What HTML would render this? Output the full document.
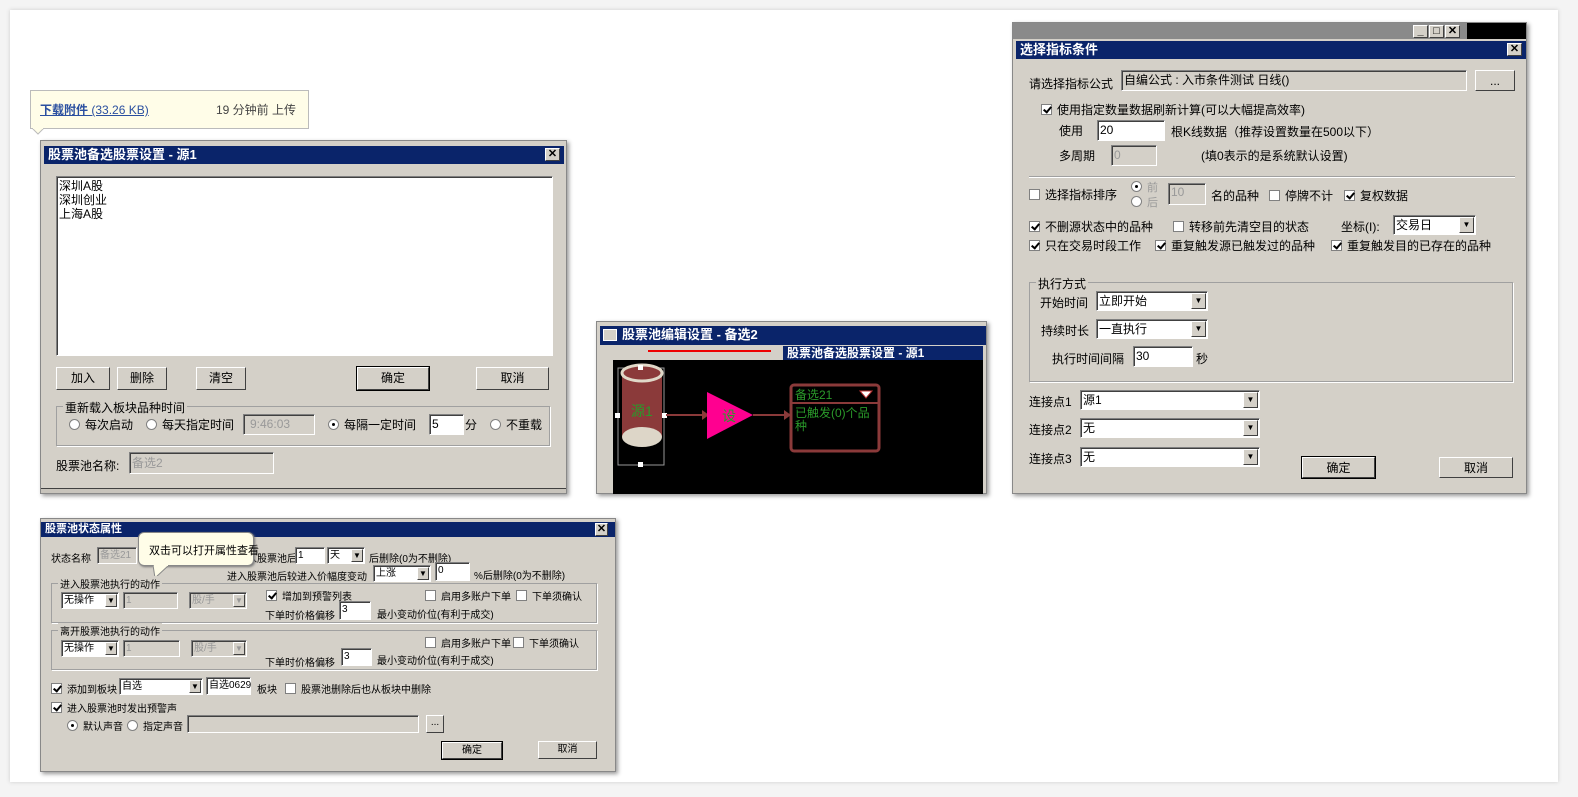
<!DOCTYPE html>
<html><head><meta charset="utf-8"><style>
*{box-sizing:border-box;margin:0;padding:0}
body{width:1578px;height:797px;background:#f4f4f4;position:relative;overflow:hidden;font-family:"Liberation Sans","Noto Sans CJK SC","WenQuanYi Zen Hei",sans-serif;font-size:12px;color:#000}
.a{position:absolute}
.frame{left:10px;top:10px;width:1548px;height:772px;background:#fff;box-shadow:0 0 4px #ccc}
.dlg{position:absolute;background:#d4d0c8;border:1px solid #888;box-shadow:2px 2px 4px #999}
.tb{position:absolute;background:#0a246a;color:#fff;font-weight:bold;font-size:13px;line-height:17px;padding-left:4px;white-space:nowrap;overflow:hidden}
.x{position:absolute;width:15px;height:13px;background:#d4d0c8;border:1px solid;border-color:#fff #404040 #404040 #fff;color:#000;font-size:11px;line-height:11px;text-align:center;font-weight:bold}
.in{position:absolute;background:#fff;border:1px solid;border-color:#808080 #fff #fff #808080;box-shadow:inset 1px 1px 0 #404040;padding-left:2px;line-height:16px;white-space:nowrap}
.dis{background:#d4d0c8;color:#999}
.btn{position:absolute;background:#d4d0c8;border:1px solid;border-color:#fff #404040 #404040 #fff;text-align:center;line-height:20px}
.def{outline:1px solid #000}
.t{position:absolute;white-space:nowrap}
.cb{display:inline-block;width:11px;height:11px;background:#fff;border:1px solid #808080;vertical-align:-1px;margin-right:5px;position:relative}
.cb.on::after{content:"";position:absolute;left:3px;top:0px;width:3px;height:6px;border:solid #000;border-width:0 2px 2px 0;transform:rotate(40deg)}
.rb{display:inline-block;width:11px;height:11px;background:#fff;border:1px solid #808080;border-radius:50%;vertical-align:-1px;margin-right:5px;position:relative}
.rb.on::after{content:"";position:absolute;left:3px;top:3px;width:3px;height:3px;background:#000;border-radius:50%}
.grp{position:absolute;border:1px solid #a0a0a0;box-shadow:1px 1px 0 #fff}
.grp>span{position:absolute;top:-8px;left:6px;background:#d4d0c8;padding:0 2px;white-space:nowrap}
.dd{position:absolute;right:1px;top:1px;width:15px;bottom:1px;background:#d4d0c8;border:1px solid;border-color:#fff #404040 #404040 #fff;font-size:8px;text-align:center;line-height:14px}
</style></head><body>
<div class="a frame"></div>

<!-- tooltip -->
<div class="a" style="left:30px;top:90px;width:279px;height:39px;background:#fffde8;border:1px solid #bbb"></div>
<svg class="a" style="left:32px;top:128px" width="14" height="8"><polygon points="0,0 12,0 6,6" fill="#fffde8" stroke="#bbb"/><line x1="1" y1="0" x2="11" y2="0" stroke="#fffde8" stroke-width="2"/></svg>
<div class="t" style="left:40px;top:101px;color:#2a4fa0;text-decoration:underline"><b>下载附件</b> (33.26 KB)</div>
<div class="t" style="left:216px;top:101px;color:#444">19 分钟前 上传</div>

<!-- dialog 1 -->
<div class="dlg" style="left:40px;top:140px;width:527px;height:354px">
 <div class="tb" style="left:3px;top:5px;width:520px;height:18px">股票池备选股票设置 - 源1</div>
 <div class="x" style="left:504px;top:7px">✕</div>
 <div class="in" style="left:15px;top:35px;width:497px;height:180px;line-height:14px;padding:2px">深圳A股<br>深圳创业<br>上海A股</div>
 <div class="btn" style="left:15px;top:226px;width:54px;height:23px">加入</div>
 <div class="btn" style="left:76px;top:226px;width:50px;height:23px">删除</div>
 <div class="btn" style="left:155px;top:226px;width:50px;height:23px">清空</div>
 <div class="btn def" style="left:316px;top:226px;width:72px;height:23px">确定</div>
 <div class="btn" style="left:435px;top:226px;width:73px;height:23px">取消</div>
 <div class="grp" style="left:15px;top:265px;width:494px;height:40px"><span>重新载入板块品种时间</span></div>
 <div class="t" style="left:28px;top:275px"><span class="rb"></span>每次启动</div>
 <div class="t" style="left:105px;top:275px"><span class="rb"></span>每天指定时间</div>
 <div class="in dis" style="left:202px;top:273px;width:72px;height:21px;padding-left:6px;line-height:19px">9:46:03</div>
 <div class="t" style="left:287px;top:275px"><span class="rb on"></span>每隔一定时间</div>
 <div class="in" style="left:388px;top:273px;width:35px;height:21px;line-height:19px">5</div>
 <div class="t" style="left:424px;top:275px">分</div>
 <div class="t" style="left:449px;top:275px"><span class="rb"></span>不重载</div>
 <div class="t" style="left:15px;top:316px">股票池名称:</div>
 <div class="in dis" style="left:88px;top:311px;width:145px;height:22px;line-height:20px">备选2</div>
 <div class="a" style="left:0;top:347px;width:525px;height:5px;border-top:1px solid #404040;background:#c8c4bc"></div>
</div>

<!-- dialog 2 -->
<div class="dlg" style="left:596px;top:321px;width:391px;height:173px">
 <div class="tb" style="left:3px;top:4px;width:386px;height:19px;padding-left:22px">股票池编辑设置 - 备选2</div>
 <div class="a" style="left:6px;top:7px;width:14px;height:12px;background:#d4d0c8;border:1px solid #fff"></div>
 <div class="a" style="left:51px;top:28px;width:123px;height:2px;background:#e00"></div>
 <div class="tb" style="left:186px;top:24px;width:200px;height:14px;line-height:14px;font-size:12px">股票池备选股票设置 - 源1</div>
 <div class="a" style="left:16px;top:38px;width:370px;height:134px;background:#000"></div>
 <svg class="a" style="left:16px;top:38px" width="370" height="134">
  <rect x="5" y="8" width="46" height="97" fill="none" stroke="#999"/>
  <rect x="9" y="13" width="40" height="64" fill="#8b3a3a"/>
  <ellipse cx="29" cy="13" rx="20" ry="8" fill="#8b3a3a" stroke="#e0d8c8" stroke-width="3"/>
  <ellipse cx="29" cy="77" rx="20" ry="10" fill="#ddd6c8"/>
  <text x="18" y="56" fill="#2a9a2a" font-size="14">源1</text>
  <rect x="25" y="5" width="5" height="5" fill="#fff"/><rect x="25" y="102" width="5" height="5" fill="#fff"/>
  <rect x="2" y="53" width="5" height="5" fill="#fff"/><rect x="49" y="53" width="5" height="5" fill="#fff"/>
  <line x1="53" y1="55" x2="94" y2="55" stroke="#8b3a3a" stroke-width="2"/><polygon points="89,50 96,55 89,60" fill="#8b3a3a"/>
  <polygon points="94,32 94,79 140,55" fill="#ff0090"/>
  <text x="109" y="61" fill="#2a9a2a" font-size="14">设</text>
  <line x1="140" y1="55" x2="176" y2="55" stroke="#8b3a3a" stroke-width="2"/><polygon points="171,50 178,55 171,60" fill="#8b3a3a"/>
  <rect x="178" y="25" width="88" height="66" rx="3" fill="none" stroke="#8b3a3a" stroke-width="3"/>
  <line x1="178" y1="43" x2="266" y2="43" stroke="#8b3a3a" stroke-width="2"/>
  <text x="182" y="39" fill="#2a9a2a" font-size="12">备选21</text>
  <polygon points="247,31 259,31 253,38" fill="#fff" stroke="#b33"/>
  <text x="182" y="57" fill="#2a9a2a" font-size="12">已触发(0)个品</text>
  <text x="182" y="70" fill="#2a9a2a" font-size="12">种</text>
 </svg>
</div>

<!-- dialog 3 -->
<div class="dlg" style="left:1012px;top:22px;width:515px;height:472px">
 <div class="a" style="left:0;top:0;width:513px;height:16px;background:#8a8a8a"></div>
 <div class="x" style="left:400px;top:2px;height:13px">_</div>
 <div class="x" style="left:416px;top:2px;height:13px">□</div>
 <div class="x" style="left:432px;top:2px;height:13px">✕</div>
 <div class="a" style="left:454px;top:0;width:59px;height:16px;background:#000"></div>
 <div class="tb" style="left:3px;top:18px;width:510px;height:18px">选择指标条件</div>
 <div class="x" style="left:494px;top:20px">✕</div>
 <div class="t" style="left:16px;top:52px">请选择指标公式</div>
 <div class="in dis" style="left:108px;top:47px;width:346px;height:21px;color:#000;line-height:19px">自编公式 : 入市条件测试 日线()</div>
 <div class="btn" style="left:462px;top:47px;width:40px;height:21px">...</div>
 <div class="t" style="left:28px;top:78px"><span class="cb on"></span>使用指定数量数据刷新计算(可以大幅提高效率)</div>
 <div class="t" style="left:46px;top:99px">使用</div>
 <div class="in" style="left:84px;top:97px;width:68px;height:21px;line-height:19px">20</div>
 <div class="t" style="left:158px;top:100px">根K线数据（推荐设置数量在500以下）</div>
 <div class="t" style="left:46px;top:124px">多周期</div>
 <div class="in dis" style="left:98px;top:122px;width:46px;height:21px;line-height:19px">0</div>
 <div class="t" style="left:188px;top:124px">(填0表示的是系统默认设置)</div>
 <div class="a" style="left:16px;top:153px;width:486px;height:2px;border-top:1px solid #a0a0a0;border-bottom:1px solid #fff"></div>
 <div class="t" style="left:16px;top:163px"><span class="cb"></span>选择指标排序</div>
 <div class="t" style="left:118px;top:156px;color:#999;font-size:11px"><span class="rb on"></span>前</div>
 <div class="t" style="left:118px;top:171px;color:#999;font-size:11px"><span class="rb"></span>后</div>
 <div class="in dis" style="left:155px;top:160px;width:38px;height:22px">10</div>
 <div class="t" style="left:198px;top:164px">名的品种</div>
 <div class="t" style="left:256px;top:164px"><span class="cb"></span>停牌不计</div>
 <div class="t" style="left:331px;top:164px"><span class="cb on"></span>复权数据</div>
 <div class="t" style="left:16px;top:195px"><span class="cb on"></span>不删源状态中的品种</div>
 <div class="t" style="left:160px;top:195px"><span class="cb"></span>转移前先清空目的状态</div>
 <div class="t" style="left:328px;top:195px">坐标(I):</div>
 <div class="in" style="left:380px;top:192px;width:83px;height:20px;line-height:18px">交易日<div class="dd">▼</div></div>
 <div class="t" style="left:16px;top:214px"><span class="cb on"></span>只在交易时段工作</div>
 <div class="t" style="left:142px;top:214px"><span class="cb on"></span>重复触发源已触发过的品种</div>
 <div class="t" style="left:318px;top:214px"><span class="cb on"></span>重复触发目的已存在的品种</div>
 <div class="grp" style="left:16px;top:259px;width:484px;height:100px"><span>执行方式</span></div>
 <div class="t" style="left:27px;top:271px">开始时间</div>
 <div class="in" style="left:83px;top:268px;width:112px;height:20px;line-height:18px">立即开始<div class="dd">▼</div></div>
 <div class="t" style="left:28px;top:299px">持续时长</div>
 <div class="in" style="left:83px;top:296px;width:112px;height:20px;line-height:18px">一直执行<div class="dd">▼</div></div>
 <div class="t" style="left:39px;top:327px">执行时间间隔</div>
 <div class="in" style="left:120px;top:323px;width:60px;height:21px;line-height:19px">30</div>
 <div class="t" style="left:183px;top:327px">秒</div>
 <div class="t" style="left:16px;top:370px">连接点1</div>
 <div class="in" style="left:67px;top:367px;width:180px;height:20px;line-height:18px">源1<div class="dd">▼</div></div>
 <div class="t" style="left:16px;top:398px">连接点2</div>
 <div class="in" style="left:67px;top:395px;width:180px;height:20px;line-height:18px">无<div class="dd">▼</div></div>
 <div class="t" style="left:16px;top:427px">连接点3</div>
 <div class="in" style="left:67px;top:424px;width:180px;height:20px;line-height:18px">无<div class="dd">▼</div></div>
 <div class="btn def" style="left:289px;top:434px;width:73px;height:21px">确定</div>
 <div class="btn" style="left:426px;top:434px;width:74px;height:21px">取消</div>
</div>

<!-- dialog 4 -->
<div class="dlg" style="left:40px;top:518px;width:576px;height:254px;font-size:10px">
 <div class="tb" style="left:0;top:3px;width:574px;height:15px;line-height:15px;font-size:11px">股票池状态属性</div>
 <div class="x" style="left:554px;top:4px;height:13px;width:13px">✕</div>
 <div class="t" style="left:10px;top:31px">状态名称</div>
 <div class="in dis" style="left:56px;top:28px;width:40px;height:17px;line-height:15px">备选21</div>
 <div class="t" style="left:196px;top:31px">进入股票池后</div>
 <div class="in" style="left:254px;top:28px;width:30px;height:17px;line-height:15px">1</div>
 <div class="in" style="left:286px;top:28px;width:38px;height:17px;line-height:15px">天<div class="dd" style="width:12px;line-height:12px">▼</div></div>
 <div class="t" style="left:328px;top:31px">后删除(0为不删除)</div>
 <div class="t" style="left:186px;top:49px">进入股票池后较进入价幅度变动</div>
 <div class="in" style="left:332px;top:46px;width:58px;height:17px;line-height:15px">上涨<div class="dd" style="width:12px;line-height:12px">▼</div></div>
 <div class="in" style="left:394px;top:43px;width:35px;height:19px;line-height:15px">0</div>
 <div class="t" style="left:433px;top:48px">%后删除(0为不删除)</div>
 <div class="a" style="left:97px;top:13px;width:116px;height:34px;background:#fffde8;border:1px solid #888;border-radius:6px;box-shadow:1px 1px 2px #777"></div>
 <div class="t" style="left:108px;top:23px;font-size:11px">双击可以打开属性查看</div>
 <svg class="a" style="left:112px;top:46px" width="20" height="14"><polygon points="0,0 16,0 2,13" fill="#fffde8" stroke="#888"/><line x1="1" y1="0" x2="15" y2="0" stroke="#fffde8" stroke-width="2"/></svg>
 <div class="grp" style="left:10px;top:64px;width:546px;height:40px"><span>进入股票池执行的动作</span></div>
 <div class="in" style="left:20px;top:73px;width:58px;height:17px;line-height:15px">无操作<div class="dd" style="width:12px;line-height:12px">▼</div></div>
 <div class="in dis" style="left:82px;top:73px;width:55px;height:17px;line-height:15px">1</div>
 <div class="in dis" style="left:148px;top:73px;width:58px;height:17px;line-height:15px">股/手<div class="dd" style="width:12px;line-height:12px">▼</div></div>
 <div class="t" style="left:225px;top:69px"><span class="cb on"></span>增加到预警列表</div>
 <div class="t" style="left:384px;top:69px"><span class="cb"></span>启用多账户下单</div>
 <div class="t" style="left:475px;top:69px"><span class="cb"></span>下单须确认</div>
 <div class="t" style="left:224px;top:88px">下单时价格偏移</div>
 <div class="in" style="left:298px;top:82px;width:32px;height:19px;line-height:15px">3</div>
 <div class="t" style="left:336px;top:87px">最小变动价位(有利于成交)</div>
 <div class="grp" style="left:10px;top:111px;width:546px;height:40px"><span>离开股票池执行的动作</span></div>
 <div class="in" style="left:20px;top:121px;width:58px;height:17px;line-height:15px">无操作<div class="dd" style="width:12px;line-height:12px">▼</div></div>
 <div class="in dis" style="left:82px;top:121px;width:57px;height:17px;line-height:15px">1</div>
 <div class="in dis" style="left:150px;top:121px;width:56px;height:17px;line-height:15px">股/手<div class="dd" style="width:12px;line-height:12px">▼</div></div>
 <div class="t" style="left:384px;top:116px"><span class="cb"></span>启用多账户下单</div>
 <div class="t" style="left:472px;top:116px"><span class="cb"></span>下单须确认</div>
 <div class="t" style="left:224px;top:135px">下单时价格偏移</div>
 <div class="in" style="left:300px;top:129px;width:31px;height:18px;line-height:15px">3</div>
 <div class="t" style="left:336px;top:133px">最小变动价位(有利于成交)</div>
 <div class="t" style="left:10px;top:162px"><span class="cb on"></span>添加到板块</div>
 <div class="in" style="left:78px;top:159px;width:84px;height:17px;line-height:15px">自选<div class="dd" style="width:12px;line-height:12px">▼</div></div>
 <div class="in" style="left:165px;top:158px;width:45px;height:18px;line-height:15px">自选0629</div>
 <div class="t" style="left:216px;top:162px">板块</div>
 <div class="t" style="left:244px;top:162px"><span class="cb"></span>股票池删除后也从板块中删除</div>
 <div class="t" style="left:10px;top:181px"><span class="cb on"></span>进入股票池时发出预警声</div>
 <div class="t" style="left:26px;top:199px"><span class="rb on"></span>默认声音</div>
 <div class="t" style="left:86px;top:199px"><span class="rb"></span>指定声音</div>
 <div class="in dis" style="left:146px;top:196px;width:232px;height:18px"></div>
 <div class="btn" style="left:385px;top:196px;width:18px;height:18px;line-height:14px">...</div>
 <div class="btn def" style="left:401px;top:223px;width:60px;height:17px;line-height:15px">确定</div>
 <div class="btn" style="left:497px;top:222px;width:59px;height:18px;line-height:16px">取消</div>
</div>
</body></html>
